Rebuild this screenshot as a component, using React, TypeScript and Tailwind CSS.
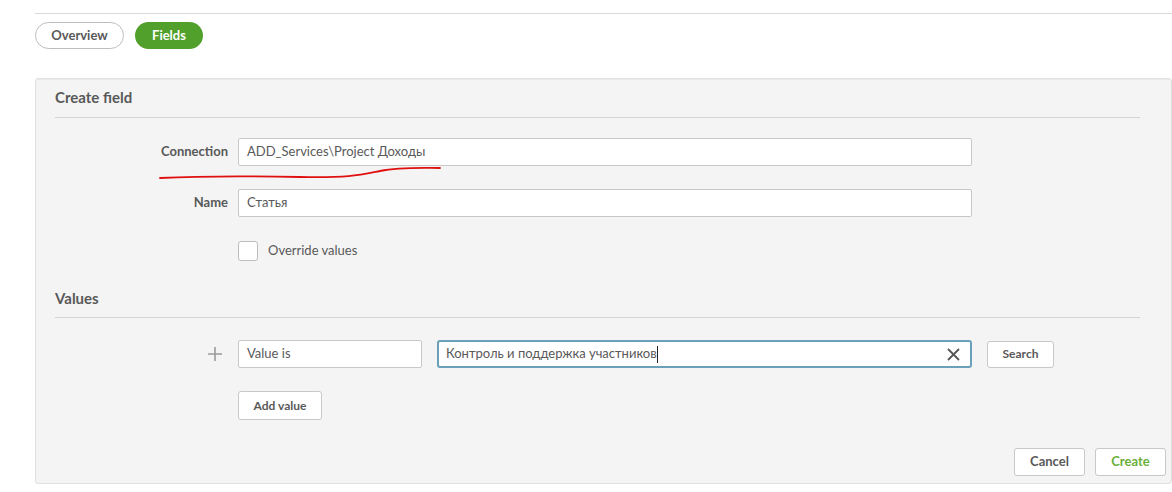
import React from "react";

const font = { fontFamily: "Lato, 'Noto Sans', sans-serif" };

export default function App() {
  return (
    <div className="relative w-[1172px] h-[492px] bg-white overflow-hidden text-[#595959]" style={font}>
      <div className="ml-[35px] pt-[13px]">
        <div className="border-t border-[#d9d9d9]" />
        <div className="flex gap-[11px] mt-[8px]">
          <button className="h-[27px] w-[89px] rounded-full border border-[#bdbdbd] bg-white text-[13px] font-bold text-[#595959]">Overview</button>
          <button className="h-[27px] w-[68px] rounded-full bg-[#52a02c] text-[13px] font-bold text-white">Fields</button>
        </div>
        <div className="mt-[29px] h-[406px] border border-[#e0e0e0] rounded-[3px] bg-[#f4f4f4] px-[19px] pt-[8px] shadow-[inset_0_1px_0_#ebebeb]">
          <div className="text-[15px] font-bold text-[#595959] leading-[20px]">Create field</div>
          <div className="mt-[10px] border-t border-[#d4d4d4] mr-[12px]" />
          <div className="pl-[97px] pt-[20px]">
            <div className="flex items-center h-[28px]">
              <div className="w-[76px] text-right text-[13px] font-bold text-[#595959]">Connection</div>
              <div className="ml-[10px] w-[734px] h-[28px] bg-white border border-[#c8c8c8] rounded-[2px] flex items-center px-[8px] text-[13px] text-[#595959]">ADD_Services\Project Доходы</div>
            </div>
            <div className="flex items-center h-[28px] mt-[23px]">
              <div className="w-[76px] text-right text-[13px] font-bold text-[#595959]">Name</div>
              <div className="ml-[10px] w-[734px] h-[28px] bg-white border border-[#c8c8c8] rounded-[2px] flex items-center px-[8px] text-[13px] text-[#595959]">Статья</div>
            </div>
            <div className="flex items-center mt-[24px] ml-[86px]">
              <div className="w-[20px] h-[20px] bg-white border border-[#bdbdbd] rounded-[3px]" />
              <span className="ml-[10px] text-[13px] text-[#595959]">Override values</span>
            </div>
          </div>
          <div className="mt-[27px] text-[15px] font-bold text-[#595959] leading-[20px]">Values</div>
          <div className="mt-[9px] border-t border-[#d4d4d4] mr-[12px]" />
          <div className="pl-[150px] pt-[22px]">
            <div className="flex items-center h-[28px]">
              <div className="w-[33px] pl-[3px] flex items-center">
                <svg width="14" height="14" viewBox="0 0 14 14"><path d="M7 0v14M0 7h14" stroke="#9a9a9a" strokeWidth="1.6" /></svg>
              </div>
              <div className="w-[184px] h-[28px] bg-white border border-[#c8c8c8] rounded-[2px] flex items-center px-[8px] text-[13px] text-[#595959]">Value is</div>
              <div className="ml-[15px] w-[535px] h-[28px] bg-white border-2 border-[#6aa0b8] rounded-[3px] flex items-center pl-[7px] pr-[10px] text-[13px] text-[#595959]">
                <span>Контроль и поддержка участников</span>
                <span className="w-px h-[17px] bg-[#222]" />
                <span className="ml-auto">
                  <svg width="13" height="13" viewBox="0 0 13 13"><path d="M1 1l11 11M12 1L1 12" stroke="#555" strokeWidth="1.8" /></svg>
                </span>
              </div>
              <button className="ml-[15px] w-[67px] h-[27px] bg-white border border-[#c8c8c8] rounded-[3px] text-[12px] font-bold text-[#595959]">Search</button>
            </div>
            <button className="mt-[23px] ml-[33px] w-[84px] h-[29px] bg-white border border-[#c8c8c8] rounded-[3px] text-[12px] font-bold text-[#595959]">Add value</button>
          </div>
          <div className="flex justify-end gap-[10px] mt-[28px] mr-[-14px]">
            <button className="w-[71px] h-[28px] bg-white border border-[#c8c8c8] rounded-[3px] text-[13px] font-bold text-[#595959]">Cancel</button>
            <button className="w-[71px] h-[28px] bg-white border border-[#c8c8c8] rounded-[3px] text-[13px] font-bold text-[#6aaf3c]">Create</button>
          </div>
        </div>
      </div>
      <svg className="absolute left-0 top-0 pointer-events-none" width="1172" height="492">
        <path d="M160 178 C 200 176, 250 176, 300 177 S 360 175, 380 171 S 420 168, 440 168" stroke="#e01010" strokeWidth="1.8" fill="none" strokeLinecap="round" />
      </svg>
    </div>
  );
}
